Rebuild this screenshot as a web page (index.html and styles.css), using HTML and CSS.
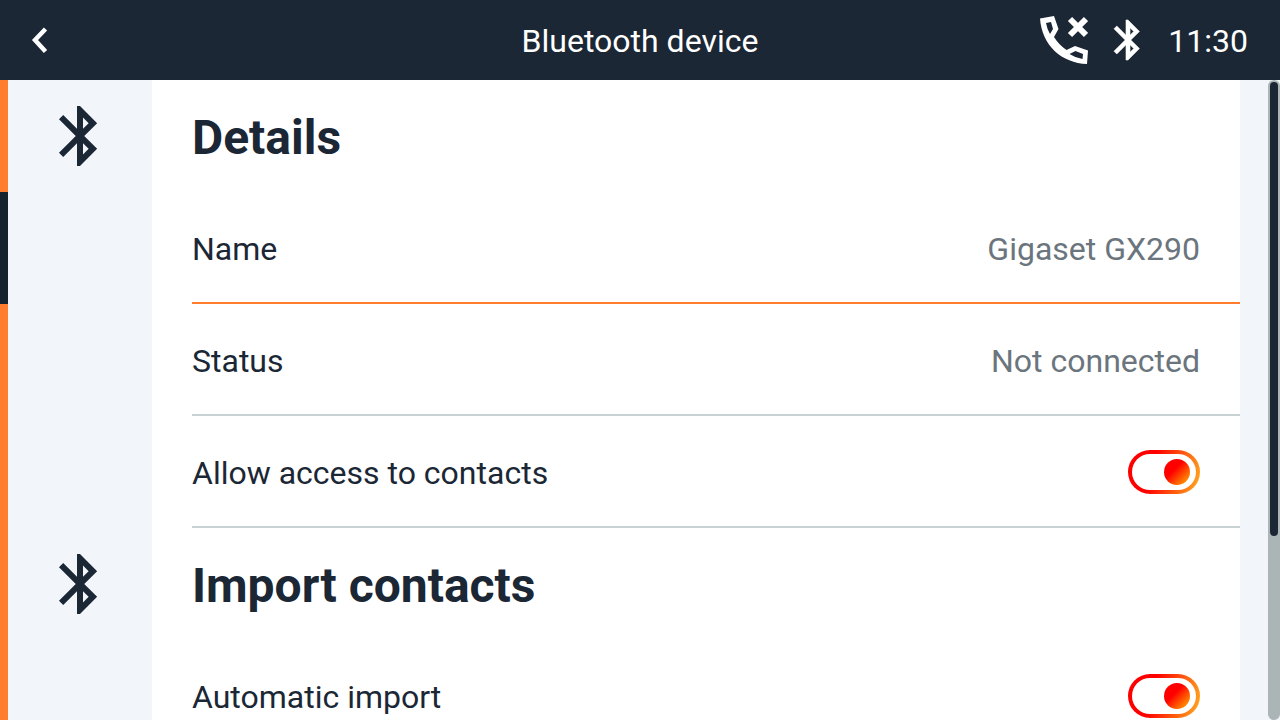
FILE: index.html
```
<!DOCTYPE html>
<html lang="en">
<head>
    <meta charset="utf-8">
    <title>Bluetooth device</title>
    <meta name="viewport" content="width=device-width, initial-scale=1.0">
    <link rel="stylesheet" href="styles.css">
</head>
<body>
    <svg class="sprite" aria-hidden="true">
        <symbol id="bluetooth" viewBox="0 0 24 24">
            <path d="M17.71 7.71L12 2h-1v7.59L6.41 5 5 6.41 10.59 12 5 17.59 6.41 19 11 14.41V22h1l5.71-5.71-4.3-4.29 4.3-4.29zM13 5.83l1.88 1.88L13 9.59V5.83zm1.88 10.46L13 18.17v-3.76l1.88 1.88z"/>
        </symbol>
    </svg>

    <header class="topbar">
        <button class="back" type="button" aria-label="Back">
            <svg viewBox="0 0 48 48"><path d="M29.500 13L19 24l10.500 11.500" stroke-width="4.500"/></svg>
        </button>
        <h1 class="title">Bluetooth device</h1>
        <div class="status">
            <svg class="status-icon" viewBox="0 0 48 48">
                <path fill-rule="evenodd" d="M0 2.5L14 0l4.500 13L14 21q5 8 12.500 13L35 30l13 4.500L47 48C22 47 2 30 0 2.500zM6 7q1 6 4 11L13 13 11 6zM29.500 38q6 4 13 5L43 38l-7.500-3z"/>
                <path d="M30 3l16 16M46 3L30 19" stroke="#fff" stroke-width="6"/>
            </svg>
            <svg class="status-icon status-bluetooth"><use href="#bluetooth"/></svg>
            <span class="time">11:30</span>
        </div>
    </header>

    <div class="screen">
        <main class="list">
            <section>
                <div class="row">
                    <div class="gutter"><svg class="section-icon"><use href="#bluetooth"/></svg></div>
                    <div class="panel"><h2 class="heading">Details</h2></div>
                </div>
                <div class="row row-selected">
                    <div class="gutter"></div>
                    <div class="panel"><div class="item"><span class="label">Name</span><span class="label value">Gigaset GX290</span></div></div>
                </div>
                <div class="row">
                    <div class="gutter"></div>
                    <div class="panel"><div class="item"><span class="label">Status</span><span class="label value">Not connected</span></div></div>
                </div>
                <div class="row">
                    <div class="gutter"></div>
                    <div class="panel">
                        <div class="item">
                            <label class="label" for="allowAccess">Allow access to contacts</label>
                            <input class="toggle" type="checkbox" id="allowAccess" checked>
                        </div>
                    </div>
                </div>
            </section>
            <section>
                <div class="row">
                    <div class="gutter"><svg class="section-icon"><use href="#bluetooth"/></svg></div>
                    <div class="panel"><h2 class="heading">Import contacts</h2></div>
                </div>
                <div class="row">
                    <div class="gutter"></div>
                    <div class="panel">
                        <div class="item">
                            <label class="label" for="autoImport">Automatic import</label>
                            <input class="toggle" type="checkbox" id="autoImport" checked>
                        </div>
                    </div>
                </div>
            </section>
        </main>
        <div class="scrollbar"><div class="thumb"></div></div>
    </div>
</body>
</html>
```

FILE: styles.css
```
* {
    box-sizing: border-box;
}
body {
    margin: 0;
    height: 100vh;
    display: flex;
    flex-direction: column;
    overflow: hidden;
    background: #f2f5fa;
    color: #1b2735;
    font-family: Roboto, sans-serif;
    font-size: 32px;
    line-height: 40px;
}
h1, h2 {
    margin: 0;
}
.sprite {
    display: none;
}

/* top bar */
.topbar {
    flex: none;
    display: grid;
    grid-template-columns: 1fr auto 1fr;
    align-items: center;
    height: 80px;
    padding: 0 32px;
    background: #1b2735;
    color: #fff;
}
.back {
    width: 48px;
    height: 48px;
    margin-left: -16px;
    padding: 0;
    border: none;
    background: none;
    cursor: pointer;
}
.back svg {
    display: block;
    fill: none;
    stroke: #fff;
}
.title {
    font-size: 32px;
    font-weight: 400;
    padding-top: 2px;
}
.status {
    display: flex;
    align-items: center;
    justify-content: flex-end;
    gap: 16px;
}
.status-icon {
    width: 48px;
    height: 48px;
    fill: #fff;
}
.status-bluetooth {
    stroke: #fff;
    stroke-width: 0.3;
}
.time {
    padding-top: 2px;
}

/* settings list */
.screen {
    flex: 1;
    min-height: 0;
    display: flex;
}
.list {
    flex: 1;
    overflow: hidden;
}
.row {
    display: flex;
    height: 112px;
    padding-right: 28px;
    border-left: 8px solid #ff7d2d;
}
.row-selected {
    border-left-color: #14232d;
}
.gutter {
    flex: none;
    width: 144px;
    display: flex;
    align-items: center;
    justify-content: center;
}
.section-icon {
    width: 72px;
    height: 72px;
    fill: #1b2735;
}
.panel {
    flex: 1;
    display: flex;
    align-items: center;
    padding-left: 40px;
    background: #fff;
}
.heading {
    font-size: 48px;
    line-height: 56px;
    font-weight: 700;
    padding-top: 4px;
}
.item {
    flex: 1;
    height: 100%;
    display: flex;
    align-items: center;
    justify-content: space-between;
    padding: 2px 40px 0 0;
    border-bottom: 2px solid #c8d2d2;
}
.row-selected .item {
    border-color: #ff7d2d;
}
.label {
    padding-top: 2px;
}
.value {
    color: #6b757d;
}

/* toggle */
.toggle {
    appearance: none;
    display: flex;
    align-items: center;
    justify-content: flex-end;
    width: 72px;
    height: 44px;
    margin: 0;
    padding-right: 6px;
    border: 4px solid transparent;
    border-radius: 22px;
    background: linear-gradient(#fff, #fff) padding-box, linear-gradient(105deg, #f00 35%, #ffb020) border-box;
    cursor: pointer;
}
.toggle::before {
    content: "";
    width: 26px;
    height: 26px;
    border-radius: 50%;
    background: linear-gradient(135deg, #f00 40%, #ff8a00 85%);
}
.toggle:not(:checked) {
    justify-content: flex-start;
    padding: 0 0 0 6px;
}

/* scrollbar */
.scrollbar {
    flex: none;
    display: grid;
    grid-template-rows: 5fr 2fr;
    width: 12px;
    padding: 2px;
    border-radius: 6px;
    background: #abb5b5;
}
.thumb {
    border-radius: 4px;
    background: #1b2735;
}
```
